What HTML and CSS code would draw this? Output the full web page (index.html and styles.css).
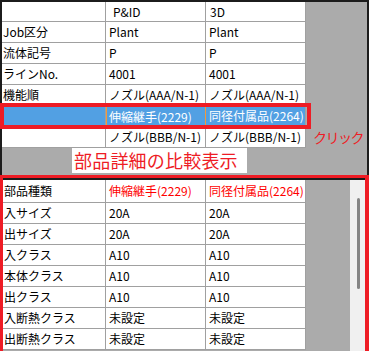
FILE: index.html
```html
<!DOCTYPE html>
<html lang="ja">
<head>
<meta charset="utf-8">
<link rel="stylesheet" href="styles.css">
</head>
<body>
<div class="screen">
  <div class="top">
    <div class="grid top-grid">
      <div class="cell head"></div><div class="cell head hp">P&amp;ID</div><div class="cell head hp3">3D</div>
      <div class="cell c1">Job区分</div><div class="cell">Plant</div><div class="cell">Plant</div>
      <div class="cell c1">流体記号</div><div class="cell">P</div><div class="cell">P</div>
      <div class="cell c1">ラインNo.</div><div class="cell">4001</div><div class="cell">4001</div>
      <div class="cell c1">機能順</div><div class="cell">ノズル(AAA/N-1)</div><div class="cell">ノズル(AAA/N-1)</div>
      <div class="cell c1 sel"></div><div class="cell sel focus">伸縮継手(2229)</div><div class="cell sel">同径付属品(2264)</div>
      <div class="cell c1"></div><div class="cell">ノズル(BBB/N-1)</div><div class="cell">ノズル(BBB/N-1)</div>
    </div>
    <div class="caption">部品詳細の比較表示</div>
    <div class="selbox"></div>
    <div class="click">クリック</div>
  </div>
  <div class="bottom">
    <div class="bottom-inner">
      <div class="grid bot-grid">
        <div class="cell b1 first">部品種類</div><div class="cell first red">伸縮継手(2229)</div><div class="cell first red">同径付属品(2264)</div>
        <div class="cell b1">入サイズ</div><div class="cell">20A</div><div class="cell">20A</div>
        <div class="cell b1">出サイズ</div><div class="cell">20A</div><div class="cell">20A</div>
        <div class="cell b1">入クラス</div><div class="cell">A10</div><div class="cell">A10</div>
        <div class="cell b1">本体クラス</div><div class="cell">A10</div><div class="cell">A10</div>
        <div class="cell b1">出クラス</div><div class="cell">A10</div><div class="cell">A10</div>
        <div class="cell b1">入断熱クラス</div><div class="cell">未設定</div><div class="cell">未設定</div>
        <div class="cell b1">出断熱クラス</div><div class="cell">未設定</div><div class="cell">未設定</div>
      </div>
      <div class="filler"></div>
      <div class="scroll"><div class="thumb"></div></div>
    </div>
  </div>
</div>
</body>
</html>
```
FILE: styles.css
```css
html, body {
  margin: 0;
  padding: 0;
  background: #ababab;
}
.screen {
  width: 369px;
  height: 351px;
  overflow: hidden;
  font-family: "Noto Sans CJK JP", "DejaVu Sans", sans-serif;
  font-size: 12px;
  color: #000;
}
.top {
  position: relative;
  box-sizing: border-box;
  height: 175px;
  border: 2px solid #1c1c1c;
  border-bottom: none;
  background: #ababab;
}
.grid {
  display: grid;
  background: #fff;
}
.top-grid {
  width: 304px;
  grid-template-columns: 104px 100px 100px;
  grid-auto-rows: 21px;
  grid-template-rows: 20px;
}
.cell {
  box-sizing: border-box;
  border-right: 1px solid #a0a0a0;
  border-bottom: 1px solid #a0a0a0;
  display: flex;
  align-items: center;
  padding-left: 3px;
  white-space: nowrap;
  overflow: hidden;
  line-height: 20px;
}
.c1 { padding-left: 1px; }
.hp { padding-left: 7px; }
.hp3 { padding-left: 4px; }
.sel {
  background: #52a0e3;
  color: #fff;
}
.focus {
  border: 1px solid #f39a3c;
  padding-left: 2px;
}
.caption {
  margin-left: 70px;
  width: 173px;
  height: 25px;
  padding-left: 2px;
  background: #fff;
  color: #ee1c25;
  font-size: 18px;
  line-height: 25px;
  letter-spacing: 0.2px;
}
.selbox {
  position: absolute;
  left: -2px;
  top: 101px;
  width: 311px;
  height: 26px;
  box-sizing: border-box;
  border: 4px solid #ee1c25;
}
.click {
  position: absolute;
  left: 311px;
  top: 125px;
  font-size: 14px;
  letter-spacing: -1.5px;
  line-height: 20px;
  color: #ee1c25;
  white-space: nowrap;
}
.bottom {
  box-sizing: border-box;
  height: 176px;
  border: 3px solid #ee1c25;
  border-right-width: 4px;
  border-bottom: none;
  background: #ababab;
}
.bottom-inner {
  display: flex;
  height: 100%;
  box-sizing: border-box;
  border-top: 2px solid #1c1c1c;
}
.bot-grid {
  width: 303px;
  grid-template-columns: 103px 100px 100px;
  grid-template-rows: 23px;
  grid-auto-rows: 21px;
  align-self: flex-start;
}
.b1 { padding-left: 1px; }
.red { color: #f00; }
.filler { flex: 1; }
.scroll {
  width: 15px;
  background: #f0f0f0;
}
.thumb {
  margin-top: 18px;
  margin-left: 7px;
  width: 3px;
  height: 91px;
  background: #858585;
  border-radius: 2px;
}
```
